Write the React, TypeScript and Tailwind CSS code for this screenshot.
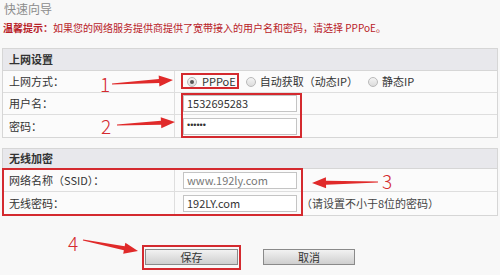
const font = { fontFamily: '"Noto Sans CJK SC", "Liberation Sans", sans-serif' };

function Radio({ on }: { on?: boolean }) {
  return (
    <span className="inline-flex h-[10px] w-[10px] items-center justify-center rounded-full border border-[#b9b9b9] bg-gradient-to-b from-[#f4f4f4] to-[#dcdcdc]">
      {on && <span className="h-[4px] w-[4px] rounded-full bg-[#555]" />}
    </span>
  );
}

function Row({ label, children, last }: { label: string; children?: React.ReactNode; last?: boolean }) {
  return (
    <div className={`flex h-[22px] bg-[#fbfbfb] ${last ? "" : "border-b border-[#dedede]"}`}>
      <div className="flex w-[172px] items-center border-r border-[#dedede] pl-[6px] text-[11px] text-[#333]">{label}</div>
      <div className="flex flex-1 items-center pl-[8px] text-[11px] text-[#333]">{children}</div>
    </div>
  );
}

function Input({ value, muted, dots }: { value: string; muted?: boolean; dots?: boolean }) {
  return (
    <div
      className={`flex h-[17px] w-[114px] items-center border border-[#c4c4c4] bg-white pl-[3px] ${dots ? "font-['Liberation_Sans'] text-[9px]" : "text-[11px]"} ${muted ? "text-[#777]" : "text-[#333]"}`}
    >
      {value}
    </div>
  );
}

function Arrow({ x1, y1, x2, y2 }: { x1: number; y1: number; x2: number; y2: number }) {
  const dx = x2 - x1;
  const dy = y2 - y1;
  const len = Math.hypot(dx, dy);
  const ux = dx / len;
  const uy = dy / len;
  const nx = -uy;
  const ny = ux;
  const hb = 14; // head length
  const bx = x2 - ux * hb;
  const by = y2 - uy * hb;
  const pts = [
    [x1 + nx * 0.6, y1 + ny * 0.6],
    [bx + nx * 2, by + ny * 2],
    [bx + nx * 5.5, by + ny * 5.5],
    [x2, y2],
    [bx - nx * 5.5, by - ny * 5.5],
    [bx - nx * 2, by - ny * 2],
    [x1 - nx * 0.6, y1 - ny * 0.6],
  ]
    .map((p) => p.join(","))
    .join(" ");
  return <polygon points={pts} fill="#e02a2a" />;
}

export default function App() {
  return (
    <div className="relative h-[275px] w-[500px] overflow-hidden bg-[#f8f8f8]" style={font}>
      <div className="h-[18px] pl-[4px] text-[12px] leading-[18px] text-[#8c8c8c]">快速向导</div>
      <div className="h-[20px] pl-[3px] text-[10px] leading-[20px] text-[#b82228]">
        <span className="font-bold">温馨提示：</span>如果您的网络服务提供商提供了宽带接入的用户名和密码，请选择 PPPoE。
      </div>

      <div className="mx-[2px] mt-[10px] border border-[#d6d6d6]">
        <div className="flex h-[22px] items-center border-b border-[#d6d6d6] bg-[#e8e8ec] pl-[6px] text-[11px] font-bold text-[#333]">
          上网设置
        </div>
        <Row label="上网方式：">
          <div className="flex items-center gap-[5px] pl-[4px]">
            <Radio on />
            <span>PPPoE</span>
          </div>
          <div className="ml-[10px] flex items-center gap-[4px]">
            <Radio />
            <span>自动获取（动态IP）</span>
          </div>
          <div className="ml-[10px] flex items-center gap-[4px]">
            <Radio />
            <span>静态IP</span>
          </div>
        </Row>
        <Row label="用户名：">
          <Input value="1532695283" />
        </Row>
        <Row label="密码：" last>
          <Input value="••••••" dots />
        </Row>
      </div>

      <div className="mx-[2px] mt-[10px] border border-[#d6d6d6]">
        <div className="flex h-[20px] items-center border-b border-[#d6d6d6] bg-[#e8e8ec] pl-[6px] text-[11px] font-bold text-[#333]">
          无线加密
        </div>
        <div className="[&>div]:h-[23px]">
          <Row label="网络名称（SSID）：">
            <Input value="www.192ly.com" muted />
          </Row>
          <Row label="无线密码：" last>
            <Input value="192LY.com" />
            <span className="ml-[4px] text-[11px] text-[#444]">（请设置不小于8位的密码）</span>
          </Row>
        </div>
      </div>

      <div className="mt-[33px] flex gap-[25px] pl-[145px]">
        <button className="h-[16px] w-[93px] border border-[#8a8a8a] bg-gradient-to-b from-[#f2f2f2] to-[#cfcfcf] text-[11px] leading-[14px] text-[#333]">
          保存
        </button>
        <button className="h-[16px] w-[92px] border border-[#8a8a8a] bg-gradient-to-b from-[#f2f2f2] to-[#cfcfcf] text-[11px] leading-[14px] text-[#333]">
          取消
        </button>
      </div>

      {/* red annotation frames */}
      <div className="absolute left-[181px] top-[73px] h-[16px] w-[58px] border-2 border-[#d42a2f]" />
      <div className="absolute left-[181px] top-[93px] h-[45px] w-[121px] border-2 border-[#d42a2f]" />
      <div className="absolute left-[2px] top-[168px] h-[48px] w-[301px] border-2 border-[#d42a2f]" />
      <div className="absolute left-[142px] top-[245px] h-[25px] w-[99px] border-2 border-[#d42a2f]" />

      {/* arrows + step numbers */}
      <svg className="absolute left-0 top-0" width="500" height="275">
        <Arrow x1={112} y1={84} x2={173} y2={80} />
        <Arrow x1={117} y1={125} x2={175} y2={122} />
        <Arrow x1={378} y1={182} x2={312} y2={183} />
        <Arrow x1={83} y1={240} x2={138} y2={251} />
      </svg>
      <span className="absolute left-[100px] top-[74px] text-[19px] font-light leading-[20px] text-[#d42a2f]">1</span>
      <span className="absolute left-[101px] top-[116px] text-[19px] font-light leading-[20px] text-[#d42a2f]">2</span>
      <span className="absolute left-[382px] top-[171px] text-[19px] font-light leading-[20px] text-[#d42a2f]">3</span>
      <span className="absolute left-[68px] top-[233px] text-[19px] font-light leading-[20px] text-[#d42a2f]">4</span>
    </div>
  );
}
